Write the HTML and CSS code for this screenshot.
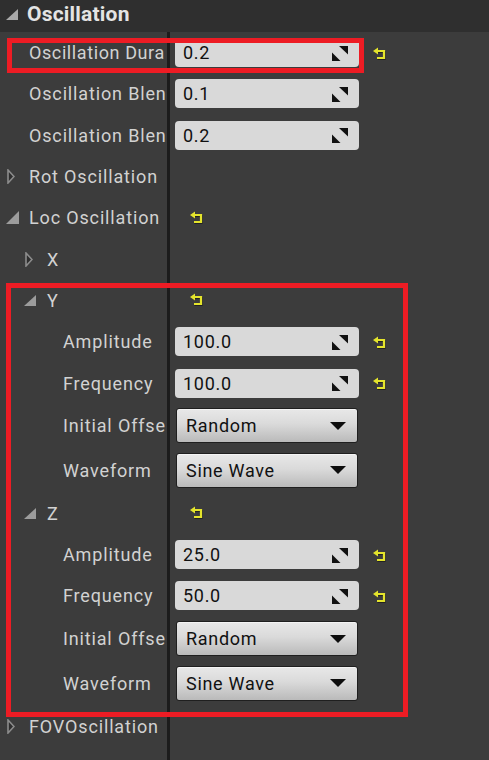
FILE: index.html
```html
<!DOCTYPE html>
<html>
<head>
<meta charset="utf-8">
<link rel="stylesheet" href="styles.css">
</head>
<body>
<div class="panel">
  <div class="header">
    <svg class="tri-open hdr" width="12" height="11" viewBox="0 0 12 11"><polygon points="12,0 12,11 0,11"/></svg>
    <span class="title">Oscillation</span>
  </div>
  <div class="rows">
    <div class="row">
      <div class="name l1"><span class="slot"></span><span class="label tight">Oscillation Dura</span></div>
      <div class="value">
        <div class="numbox"><span>0.2</span><svg class="spin" width="16" height="15" viewBox="0 0 16 15"><polygon points="7,0 16,0 16,8.5"/><polygon points="0,6.5 0,15 8.5,15"/></svg></div>
        <svg class="reset num" width="14" height="14" viewBox="0 0 14 14"><path class="rs" d="M4 5 H11.5 V12 H4.5"/><path class="ry" d="M4 4 H11 V11 H4"/><polygon class="ra" points="0,4 5,0.6 5,7.4"/></svg>
      </div>
    </div>
    <div class="row">
      <div class="name l1"><span class="slot"></span><span class="label">Oscillation Blen</span></div>
      <div class="value">
        <div class="numbox"><span>0.1</span><svg class="spin" width="16" height="15" viewBox="0 0 16 15"><polygon points="7,0 16,0 16,8.5"/><polygon points="0,6.5 0,15 8.5,15"/></svg></div>
      </div>
    </div>
    <div class="row">
      <div class="name l1"><span class="slot"></span><span class="label">Oscillation Blen</span></div>
      <div class="value">
        <div class="numbox"><span>0.2</span><svg class="spin" width="16" height="15" viewBox="0 0 16 15"><polygon points="7,0 16,0 16,8.5"/><polygon points="0,6.5 0,15 8.5,15"/></svg></div>
      </div>
    </div>
    <div class="row">
      <div class="name l1"><span class="slot"><svg class="tri-closed" width="8" height="15" viewBox="0 0 8 15"><polygon points="1,1 7,7.5 1,14"/></svg></span><span class="label">Rot Oscillation</span></div>
      <div class="value"></div>
    </div>
    <div class="row">
      <div class="name l1"><span class="slot"><svg class="tri-open" width="13" height="13" viewBox="0 0 13 13"><polygon points="13,0 13,13 0,13"/></svg></span><span class="label">Loc Oscillation</span></div>
      <div class="value">
        <svg class="reset txt" width="14" height="14" viewBox="0 0 14 14"><path class="rs" d="M4 5 H11.5 V12 H4.5"/><path class="ry" d="M4 4 H11 V11 H4"/><polygon class="ra" points="0,4 5,0.6 5,7.4"/></svg>
      </div>
    </div>
    <div class="row">
      <div class="name l2"><span class="slot"><svg class="tri-closed" width="8" height="15" viewBox="0 0 8 15"><polygon points="1,1 7,7.5 1,14"/></svg></span><span class="label">X</span></div>
      <div class="value"></div>
    </div>
    <div class="row">
      <div class="name l2"><span class="slot"><svg class="tri-open" width="12" height="11" viewBox="0 0 12 11"><polygon points="12,0 12,11 0,11"/></svg></span><span class="label">Y</span></div>
      <div class="value">
        <svg class="reset txt" width="14" height="14" viewBox="0 0 14 14"><path class="rs" d="M4 5 H11.5 V12 H4.5"/><path class="ry" d="M4 4 H11 V11 H4"/><polygon class="ra" points="0,4 5,0.6 5,7.4"/></svg>
      </div>
    </div>
    <div class="row">
      <div class="name l3"><span class="slot"></span><span class="label">Amplitude</span></div>
      <div class="value">
        <div class="numbox"><span>100.0</span><svg class="spin" width="16" height="15" viewBox="0 0 16 15"><polygon points="7,0 16,0 16,8.5"/><polygon points="0,6.5 0,15 8.5,15"/></svg></div>
        <svg class="reset num" width="14" height="14" viewBox="0 0 14 14"><path class="rs" d="M4 5 H11.5 V12 H4.5"/><path class="ry" d="M4 4 H11 V11 H4"/><polygon class="ra" points="0,4 5,0.6 5,7.4"/></svg>
      </div>
    </div>
    <div class="row">
      <div class="name l3"><span class="slot"></span><span class="label">Frequency</span></div>
      <div class="value">
        <div class="numbox"><span>100.0</span><svg class="spin" width="16" height="15" viewBox="0 0 16 15"><polygon points="7,0 16,0 16,8.5"/><polygon points="0,6.5 0,15 8.5,15"/></svg></div>
        <svg class="reset num" width="14" height="14" viewBox="0 0 14 14"><path class="rs" d="M4 5 H11.5 V12 H4.5"/><path class="ry" d="M4 4 H11 V11 H4"/><polygon class="ra" points="0,4 5,0.6 5,7.4"/></svg>
      </div>
    </div>
    <div class="row combo">
      <div class="name l3"><span class="slot"></span><span class="label">Initial Offse</span></div>
      <div class="value">
        <div class="combobox"><span>Random</span><svg class="drop" width="16" height="8" viewBox="0 0 16 8"><polygon points="0,0 16,0 8,8"/></svg></div>
      </div>
    </div>
    <div class="row combo">
      <div class="name l3"><span class="slot"></span><span class="label">Waveform</span></div>
      <div class="value">
        <div class="combobox"><span>Sine Wave</span><svg class="drop" width="16" height="8" viewBox="0 0 16 8"><polygon points="0,0 16,0 8,8"/></svg></div>
      </div>
    </div>
    <div class="row">
      <div class="name l2"><span class="slot"><svg class="tri-open" width="12" height="11" viewBox="0 0 12 11"><polygon points="12,0 12,11 0,11"/></svg></span><span class="label">Z</span></div>
      <div class="value">
        <svg class="reset txt" width="14" height="14" viewBox="0 0 14 14"><path class="rs" d="M4 5 H11.5 V12 H4.5"/><path class="ry" d="M4 4 H11 V11 H4"/><polygon class="ra" points="0,4 5,0.6 5,7.4"/></svg>
      </div>
    </div>
    <div class="row">
      <div class="name l3"><span class="slot"></span><span class="label">Amplitude</span></div>
      <div class="value">
        <div class="numbox"><span>25.0</span><svg class="spin" width="16" height="15" viewBox="0 0 16 15"><polygon points="7,0 16,0 16,8.5"/><polygon points="0,6.5 0,15 8.5,15"/></svg></div>
        <svg class="reset num" width="14" height="14" viewBox="0 0 14 14"><path class="rs" d="M4 5 H11.5 V12 H4.5"/><path class="ry" d="M4 4 H11 V11 H4"/><polygon class="ra" points="0,4 5,0.6 5,7.4"/></svg>
      </div>
    </div>
    <div class="row">
      <div class="name l3"><span class="slot"></span><span class="label">Frequency</span></div>
      <div class="value">
        <div class="numbox"><span>50.0</span><svg class="spin" width="16" height="15" viewBox="0 0 16 15"><polygon points="7,0 16,0 16,8.5"/><polygon points="0,6.5 0,15 8.5,15"/></svg></div>
        <svg class="reset num" width="14" height="14" viewBox="0 0 14 14"><path class="rs" d="M4 5 H11.5 V12 H4.5"/><path class="ry" d="M4 4 H11 V11 H4"/><polygon class="ra" points="0,4 5,0.6 5,7.4"/></svg>
      </div>
    </div>
    <div class="row combo">
      <div class="name l3"><span class="slot"></span><span class="label">Initial Offse</span></div>
      <div class="value">
        <div class="combobox"><span>Random</span><svg class="drop" width="16" height="8" viewBox="0 0 16 8"><polygon points="0,0 16,0 8,8"/></svg></div>
      </div>
    </div>
    <div class="row combo">
      <div class="name l3"><span class="slot"></span><span class="label">Waveform</span></div>
      <div class="value">
        <div class="combobox"><span>Sine Wave</span><svg class="drop" width="16" height="8" viewBox="0 0 16 8"><polygon points="0,0 16,0 8,8"/></svg></div>
      </div>
    </div>
    <div class="row">
      <div class="name l1"><span class="slot"><svg class="tri-closed" width="8" height="15" viewBox="0 0 8 15"><polygon points="1,1 7,7.5 1,14"/></svg></span><span class="label">FOVOscillation</span></div>
      <div class="value"></div>
    </div>
  </div>
  <div class="hl hl1"></div>
  <div class="hl hl2"></div>
</div>
</body>
</html>
```

FILE: styles.css
```css
html, body {
  margin: 0;
  padding: 0;
  background: #3c3c3c;
}

.panel {
  position: relative;
  width: 489px;
  height: 760px;
  overflow: hidden;
  background: #3c3c3c;
  font-family: Roboto, "Liberation Sans", sans-serif;
}

.header {
  height: 32px;
  background: #2f2f2f;
  display: flex;
  align-items: center;
  padding-left: 6px;
  box-sizing: border-box;
}

.header .hdr {
  fill: #a9a9a9;
  margin-right: 9px;
  margin-top: -3px;
}

.title {
  color: #e4e4e4;
  font-weight: 700;
  font-size: 21px;
  letter-spacing: 0.2px;
  margin-top: -4px;
}

.rows {
  height: 728px;
  background: linear-gradient(to right, transparent 167px, #1c1c1c 167px, #1c1c1c 170px, transparent 170px);
}

.row {
  height: 41.3px;
  display: flex;
  align-items: center;
}

.row.combo {
  height: 44.5px;
}

.name {
  width: 167px;
  flex: none;
  box-sizing: border-box;
  overflow: hidden;
  white-space: nowrap;
  display: flex;
  align-items: center;
  color: #d2d2d2;
  font-size: 18px;
  letter-spacing: 0.85px;
}

.name.l1 { padding-left: 6px; }
.name.l2 { padding-left: 24px; }
.name.l3 { padding-left: 40px; }

.slot {
  width: 23px;
  flex: none;
  display: flex;
  align-items: center;
}

.tri-open {
  fill: #9c9c9c;
}

.tri-closed {
  fill: #2e2e2e;
  stroke: #8c8c8c;
  stroke-width: 1.6;
  margin-left: 1px;
}

.label {
  flex: none;
}

.label.tight {
  letter-spacing: 0.6px;
}

.value {
  flex: 1;
  display: flex;
  align-items: center;
  padding-left: 8px;
}

.numbox {
  width: 184px;
  height: 29px;
  box-sizing: border-box;
  background: #d9d9d9;
  border-radius: 4px;
  display: flex;
  align-items: center;
  justify-content: space-between;
  padding: 0 11px 0 8px;
  color: #111111;
  font-size: 18px;
  letter-spacing: 0.7px;
}

.spin {
  fill: #111111;
  margin-top: 1px;
}

.combobox {
  width: 182px;
  height: 35px;
  margin-left: 1px;
  box-sizing: border-box;
  border: 1px solid #1f1f1f;
  border-radius: 3px;
  background: linear-gradient(to bottom, #e8e8e8 0%, #dadada 45%, #bababa 100%);
  box-shadow: inset 0 1px 0 rgba(255, 255, 255, 0.5);
  display: flex;
  align-items: center;
  justify-content: space-between;
  padding: 0 11px 0 9px;
  color: #111111;
  font-size: 18px;
  letter-spacing: 0.7px;
}

.drop {
  fill: #0e0e0e;
}

.reset .ry {
  fill: none;
  stroke: #e4e42c;
  stroke-width: 2.2;
}

.reset .rs {
  fill: none;
  stroke: #1a1a1a;
  stroke-width: 2.2;
  opacity: 0.75;
}

.reset .ra {
  fill: #e4e42c;
}

.reset.num {
  margin-left: 14px;
  margin-top: 2px;
}

.reset.txt {
  margin-left: 15px;
}

.hl {
  position: absolute;
  border: 5px solid #ed1c24;
  box-sizing: border-box;
  pointer-events: none;
}

.hl1 {
  left: 7px;
  top: 38px;
  width: 357px;
  height: 35px;
}

.hl2 {
  left: 6px;
  top: 283px;
  width: 402px;
  height: 434px;
}
```
